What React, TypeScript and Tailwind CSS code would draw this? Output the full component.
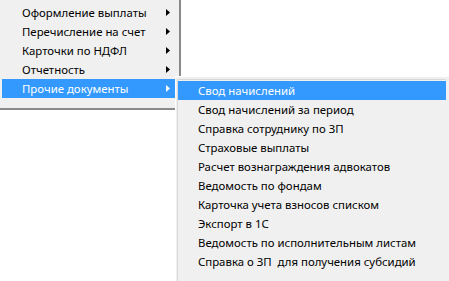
import React from 'react';

const mainItems = [
  'Оформление выплаты',
  'Перечисление на счет',
  'Карточки по НДФЛ',
  'Отчетность',
  'Прочие документы',
];

const subItems = [
  'Свод начислений',
  'Свод начислений за период',
  'Справка сотруднику по ЗП',
  'Страховые выплаты',
  'Расчет вознаграждения адвокатов',
  'Ведомость по фондам',
  'Карточка учета взносов списком',
  'Экспорт в 1С',
  'Ведомость по исполнительным листам',
  'Справка о ЗП  для получения субсидий',
];

const Arrow = ({ white }: { white?: boolean }) => (
  <svg width="4" height="7" viewBox="0 0 4 7" className="shrink-0">
    <path d="M0 0 L4 3.5 L0 7 Z" fill={white ? '#ffffff' : '#000000'} />
  </svg>
);

const App: React.FC = () => {
  return (
    <div
      className="relative w-[449px] h-[281px] overflow-hidden bg-white text-[11.4px] text-black"
      style={{ fontFamily: '"Noto Sans", "Open Sans", sans-serif' }}
    >
      {/* top level menu */}
      <div className="absolute left-0 top-0 w-[181px] h-[110px] bg-[#f0f0f0] border-r-2 border-b-2 border-r-[#8a8a8a] border-b-[#8a8a8a] pt-[3px] px-[2px]">
        {mainItems.map((item, i) => {
          const active = i === mainItems.length - 1;
          return (
            <div
              key={item}
              className={`h-[19px] flex items-center pl-[20px] pr-[7px] ${active ? 'bg-[#3399ff] text-white' : ''}`}
            >
              <span className="flex-1 leading-none whitespace-nowrap">{item}</span>
              <Arrow white={active} />
            </div>
          );
        })}
      </div>

      {/* submenu */}
      <div className="absolute left-[175px] top-[76px] w-[274px] h-[220px] bg-[#f0f0f0] border-l border-t border-white pt-[2px] pl-px pr-[3px]">
        <div className="border-l border-t border-[#d8d8d8] h-full pt-px">
          {subItems.map((item, i) => (
            <div
              key={item}
              className={`h-[19px] flex items-center pl-[20px] ${i === 0 ? 'bg-[#3399ff] text-white' : ''}`}
            >
              <span className="leading-none whitespace-pre">{item}</span>
            </div>
          ))}
        </div>
      </div>
    </div>
  );
};

export default App;
